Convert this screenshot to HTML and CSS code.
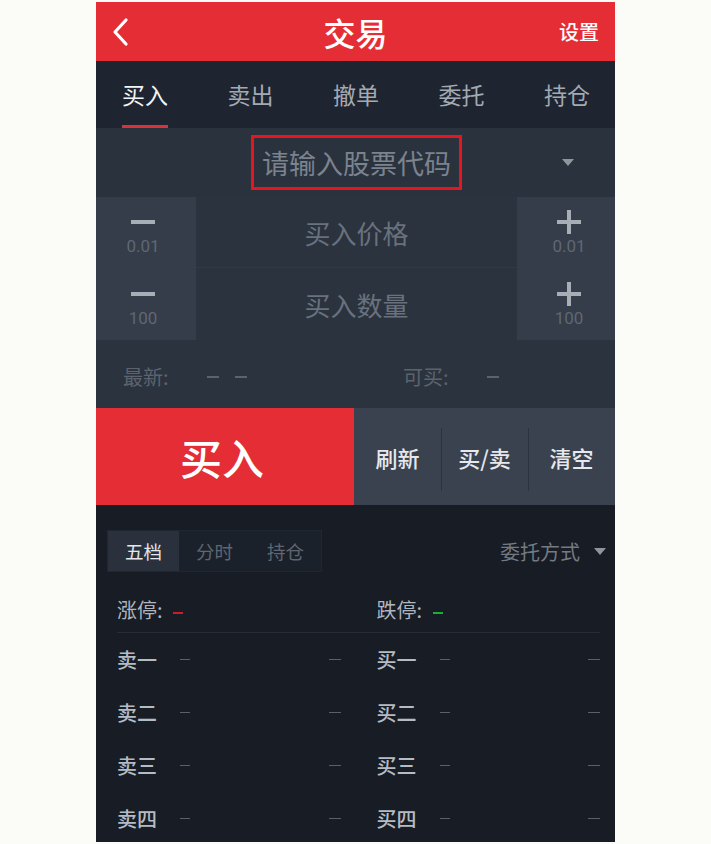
FILE: index.html
```html
<!DOCTYPE html>
<html lang="zh-CN">
<head>
    <meta charset="UTF-8">
    <meta name="viewport" content="width=device-width, initial-scale=1.0">
    <title>交易</title>
    <link rel="stylesheet" href="styles.css">
</head>
<body>
    <div class="phone">
        <div class="header">
            <div class="back">
                <svg width="20" height="30" viewBox="0 0 20 30"><path d="M15 3 L4 15 L15 27" fill="none" stroke="#fff" stroke-width="3.2" stroke-linecap="round" stroke-linejoin="round"/></svg>
            </div>
            <div class="title">交易</div>
            <div class="setting">设置</div>
        </div>

        <div class="tabs">
            <div class="tab active"><span>买入</span></div>
            <div class="tab"><span>卖出</span></div>
            <div class="tab"><span>撤单</span></div>
            <div class="tab"><span>委托</span></div>
            <div class="tab"><span>持仓</span></div>
        </div>

        <div class="stock-row">
            <div></div>
            <div class="stock-input">请输入股票代码</div>
            <div class="stock-drop"><span class="tri"></span></div>
        </div>

        <div class="order-form">
            <div class="step left">
                <span class="minus"></span>
                <span class="step-label">0.01</span>
            </div>
            <div class="field top">买入价格</div>
            <div class="step right">
                <span class="plus"></span>
                <span class="step-label">0.01</span>
            </div>
            <div class="step left">
                <span class="minus"></span>
                <span class="step-label">100</span>
            </div>
            <div class="field">买入数量</div>
            <div class="step right">
                <span class="plus"></span>
                <span class="step-label">100</span>
            </div>
        </div>

        <div class="info-row">
            <div class="info-item first"><span>最新:</span><span class="marks"><i></i><i></i></span></div>
            <div class="info-item"><span>可买:</span><span class="marks"><i></i></span></div>
        </div>

        <div class="actions">
            <div class="buy-btn">买入</div>
            <div class="act">刷新</div>
            <div class="act">买/卖</div>
            <div class="act">清空</div>
        </div>

        <div class="quotes">
            <div class="quote-bar">
                <div class="seg">
                    <div class="seg-item on">五档</div>
                    <div class="seg-item">分时</div>
                    <div class="seg-item">持仓</div>
                </div>
                <div class="mode">委托方式 <span class="tri"></span></div>
            </div>

            <div class="limits">
                <div>涨停: <span class="dash red"></span></div>
                <div>跌停: <span class="dash green"></span></div>
            </div>

            <div class="book">
                <div class="level"><span class="lv">卖一</span><span class="tiny"></span><span class="tiny end"></span></div>
                <div class="level"><span class="lv">买一</span><span class="tiny"></span><span class="tiny end"></span></div>
                <div class="level"><span class="lv">卖二</span><span class="tiny"></span><span class="tiny end"></span></div>
                <div class="level"><span class="lv">买二</span><span class="tiny"></span><span class="tiny end"></span></div>
                <div class="level"><span class="lv">卖三</span><span class="tiny"></span><span class="tiny end"></span></div>
                <div class="level"><span class="lv">买三</span><span class="tiny"></span><span class="tiny end"></span></div>
                <div class="level"><span class="lv">卖四</span><span class="tiny"></span><span class="tiny end"></span></div>
                <div class="level"><span class="lv">买四</span><span class="tiny"></span><span class="tiny end"></span></div>
            </div>
        </div>
    </div>
</body>
</html>
```

FILE: styles.css
```css
body {
    margin: 0;
    background: #fbfbf8;
    font-family: "Noto Sans CJK SC", "Noto Sans", sans-serif;
    height: 844px;
    overflow: hidden;
}
.phone {
    width: 519px;
    margin: 2px auto 0;
    background: #171c25;
    display: flex;
    flex-direction: column;
}
.header {
    height: 59px;
    background: #e52d35;
    display: grid;
    grid-template-columns: 1fr auto 1fr;
    align-items: center;
    color: #fff;
}
.back {
    padding-left: 15px;
    display: flex;
    align-items: center;
}
.title {
    font-size: 32px;
    font-weight: 500;
}
.setting {
    justify-self: end;
    padding-right: 16px;
    font-size: 20px;
    font-weight: 500;
}
.tabs {
    height: 67px;
    background: #1e2530;
    display: flex;
    justify-content: space-between;
    padding: 0 25px 0 26px;
}
.tab {
    display: flex;
    align-items: flex-end;
    justify-content: center;
    font-size: 23px;
    color: #a3aab3;
}
.tab span {
    line-height: 23px;
    padding-bottom: 19px;
    border-bottom: 3px solid transparent;
}
.tab.active {
    color: #f2f3f5;
}
.tab.active span {
    border-bottom-color: #d9323a;
}
.stock-row {
    height: 69px;
    background: #2a323e;
    display: grid;
    grid-template-columns: 1fr auto 1fr;
    align-items: center;
}
.stock-input {
    width: 205px;
    height: 49px;
    border: 3px solid #e8141e;
    display: flex;
    align-items: center;
    justify-content: center;
    font-size: 27px;
    color: #7b838e;
    margin-left: 2px;
}
.stock-drop {
    justify-self: end;
    padding-right: 41px;
    display: flex;
}
.tri {
    display: inline-block;
    width: 0;
    height: 0;
    border-left: 6px solid transparent;
    border-right: 6px solid transparent;
    border-top: 7px solid #8f959d;
}
.order-form {
    height: 143px;
    display: grid;
    grid-template-columns: 100px 1fr 98px;
    grid-template-rows: 71px 72px;
    background: #2b333f;
}
.step {
    background: #353d4a;
    display: flex;
    flex-direction: column;
    align-items: center;
    justify-content: center;
    gap: 3px;
    box-sizing: border-box;
}
.step.left {
    padding-right: 6px;
}
.step.right {
    padding-left: 6px;
}
.minus, .plus {
    position: relative;
    width: 24px;
    height: 24px;
}
.minus::before, .plus::before, .plus::after {
    content: "";
    position: absolute;
    background: #a8aeb6;
    left: 0;
    top: 10px;
    width: 24px;
    height: 4px;
}
.plus::after {
    left: 10px;
    top: 0;
    width: 4px;
    height: 24px;
}
.step-label {
    font-family: Roboto, "Noto Sans", sans-serif;
    font-size: 17px;
    line-height: 18px;
    color: #5f6773;
}
.field {
    display: flex;
    align-items: center;
    justify-content: center;
    font-size: 26px;
    color: #69717c;
    background: #2b333f;
}
.field.top {
    border-bottom: 1px solid #313946;
}
.info-row {
    height: 68px;
    background: #2b333f;
    display: flex;
    align-items: center;
    padding-left: 27px;
    padding-top: 5px;
    box-sizing: border-box;
    font-size: 20px;
    color: #5b636e;
}
.info-item {
    display: flex;
    align-items: center;
    gap: 38px;
}
.info-item.first {
    width: 280px;
}
.marks {
    display: flex;
    gap: 16px;
}
.marks i {
    width: 12px;
    height: 2px;
    background: #5b636e;
}
.actions {
    height: 97px;
    display: flex;
    background: #3a4250;
}
.buy-btn {
    width: 258px;
    background: #e52d35;
    color: #fff;
    font-size: 42px;
    font-weight: 500;
    display: flex;
    align-items: center;
    justify-content: center;
    padding-right: 6px;
    box-sizing: border-box;
}
.act {
    flex: 1;
    position: relative;
    display: flex;
    align-items: center;
    justify-content: center;
    font-size: 22px;
    color: #e6e8eb;
    font-weight: 500;
}
.act + .act::before {
    content: "";
    position: absolute;
    left: 0;
    top: 20px;
    bottom: 14px;
    width: 1px;
    background: #2c333f;
}
.quotes {
    height: 337px;
    background: #171c25;
    padding: 25px 15px 0 21px;
    box-sizing: border-box;
}
.quote-bar {
    display: flex;
    align-items: center;
    justify-content: space-between;
    margin-left: -10px;
    margin-right: -6px;
}
.seg {
    display: flex;
    height: 42px;
    width: 215px;
    background: #1b212b;
    border: 1px solid #202732;
    box-sizing: border-box;
}
.seg-item {
    flex: 1;
    display: flex;
    align-items: center;
    justify-content: center;
    font-size: 18.5px;
    color: #5f6671;
}
.seg-item.on {
    background: #2a313d;
    color: #e4e6ea;
}
.mode {
    font-size: 20px;
    color: #737a84;
    display: flex;
    align-items: center;
    gap: 14px;
}
.limits {
    display: grid;
    grid-template-columns: 1fr 1fr;
    column-gap: 36px;
    height: 61px;
    padding-top: 15px;
    box-sizing: border-box;
    align-items: center;
    font-size: 20px;
    color: #b0b6be;
    border-bottom: 1px solid #262d38;
}
.dash {
    display: inline-block;
    width: 10px;
    height: 2px;
    vertical-align: middle;
    margin-left: 6px;
}
.dash.red {
    background: #c8202a;
}
.dash.green {
    background: #19b030;
}
.book {
    display: grid;
    grid-template-columns: 1fr 1fr;
    column-gap: 36px;
    grid-auto-rows: 53px;
    padding-top: 0;
}
.level {
    display: flex;
    align-items: center;
}
.lv {
    width: 63px;
    font-size: 20px;
    font-weight: 500;
    color: #b5bbc3;
}
.tiny {
    width: 10px;
    height: 1px;
    background: #59606b;
}
.tiny.end {
    margin-left: auto;
    width: 12px;
}
```
